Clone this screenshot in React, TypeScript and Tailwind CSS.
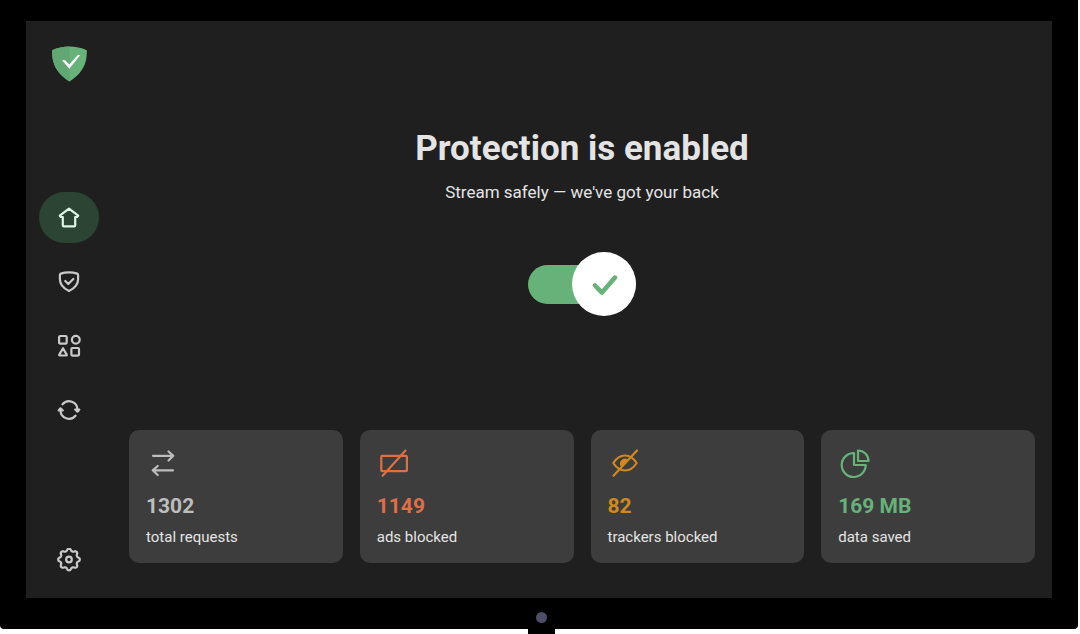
import { useState, type ReactNode } from 'react';
import clsx from 'clsx';

interface IStat {
  value: string;
  label: string;
  color: string;
  icon: ReactNode;
}

interface INavItem {
  name: string;
  icon: ReactNode;
}

// eight rounded teeth around the centre of a 24x24 box
const gearPath =
  Array.from({ length: 96 }, (_, i) => {
    const angle = (i / 96) * Math.PI * 2;
    const wave = Math.cos(angle * 8);
    const radius = 9.7 + 1.1 * Math.sign(wave) * Math.pow(Math.abs(wave), 0.6);
    const x = 12 + radius * Math.sin(angle);
    const y = 11.5 - radius * Math.cos(angle);
    return `${i === 0 ? 'M' : 'L'}${x.toFixed(2)} ${y.toFixed(2)}`;
  }).join('') + 'Z';

function NavIcon({ children }: { children: ReactNode }) {
  return (
    <svg
      viewBox="0 0 24 24"
      className="h-6 w-6"
      fill="none"
      stroke="currentColor"
      strokeWidth="2.2"
      strokeLinecap="round"
      strokeLinejoin="round"
      aria-hidden="true"
    >
      {children}
    </svg>
  );
}

function StatIcon({ children }: { children: ReactNode }) {
  return (
    <svg
      viewBox="0 0 34 34"
      className="h-[34px] w-[34px]"
      fill="none"
      stroke="currentColor"
      strokeWidth="2.2"
      strokeLinecap="round"
      strokeLinejoin="round"
      aria-hidden="true"
    >
      {children}
    </svg>
  );
}

const navItems: INavItem[] = [
  {
    name: 'Home',
    icon: (
      <NavIcon>
        <path d="M12 2.6 2.8 9.6l.9 1.4h2.1v8.600q0 .7.7.7h11q.7 0 .7-.7V11h2.100l.9-1.400Z" />
      </NavIcon>
    ),
  },
  {
    name: 'Protection',
    icon: (
      <NavIcon>
        <path d="M12 2.300c3.200 0 6.200.6 8.200 1.300q.9.4.9 1.300v4.400c0 5.300-4 9.300-9.100 11.800C6.900 18.600 2.900 14.600 2.900 9.300V4.900q0-.9.9-1.300C5.800 2.900 8.800 2.300 12 2.300Z" />
        <path d="m8.300 11 3 3 5-5" />
      </NavIcon>
    ),
  },
  {
    name: 'Apps',
    icon: (
      <NavIcon>
        <rect x="2.1" y="2" width="7.6" height="7.6" rx="1.2" />
        <circle cx="18.8" cy="5.8" r="3.9" />
        <path d="M6 14.200 2.300 20.600q-.4.900.5.900h6.400q.9 0 .5-.9Z" />
        <rect x="14.4" y="14" width="7.6" height="7.6" rx="1" />
      </NavIcon>
    ),
  },
  {
    name: 'Updates',
    icon: (
      <NavIcon>
        <path d="M5.500 6.300A8.500 8.500 0 0 1 20.500 11.500" />
        <path d="M18.500 17.700A8.500 8.500 0 0 1 3.500 12.500" />
        <path d="M1.700 12.500 3.500 10.300 5.800 12.500Z" fill="currentColor" />
        <path d="M18.200 11.500 20.500 13.700 22.300 11.500Z" fill="currentColor" />
      </NavIcon>
    ),
  },
];

const stats: IStat[] = [
  {
    value: '1302',
    label: 'total requests',
    color: 'text-[#bdbdbd]',
    icon: (
      <StatIcon>
        <path d="M7 9.800H27M22.500 5.500 27.300 9.800 22.500 14.500" />
        <path d="M27 24.300H7M11.700 20 6.700 24.300 11.700 29" />
      </StatIcon>
    ),
  },
  {
    value: '1149',
    label: 'ads blocked',
    color: 'text-[#df6f45]',
    icon: (
      <StatIcon>
        <rect x="4.3" y="9.8" width="25.6" height="15.4" rx="1" />
        <path d="M5.700 29.800 28.500 4.500" />
      </StatIcon>
    ),
  },
  {
    value: '82',
    label: 'trackers blocked',
    color: 'text-[#d0881f]',
    icon: (
      <StatIcon>
        <path d="M5.300 17C8.500 12 12.500 9.500 17 9.500S25.500 12 28.700 17C25.500 22 21.500 24.500 17 24.500S8.500 22 5.300 17Z" />
        <path d="M13.500 19.500A4 4 0 0 1 18.500 14Z" fill="currentColor" />
        <path d="M5.500 29.800 29 4.500" />
      </StatIcon>
    ),
  },
  {
    value: '169 MB',
    label: 'data saved',
    color: 'text-[#67b279]',
    icon: (
      <StatIcon>
        <path d="M16 7V19H27.700A12 12 0 1 1 16 7Z" />
        <path d="M20 4.500V15H30.500A10.500 10.500 0 0 0 20 4.500Z" />
      </StatIcon>
    ),
  },
];

function Logo() {
  return (
    <svg viewBox="0 0 36 36" className="h-9 w-9" aria-hidden="true">
      <path
        d="M18.500.5C13 .5 6.300 1.700 1.200 4.300 1.200 10 .5 24.300 18.500 35.400 36.500 24.300 35.800 10 35.800 4.300 30.700 1.700 24 .5 18.500.5Z"
        fill="#67b279"
      />
      <path
        d="M18.500.5C13 .5 6.300 1.700 1.200 4.300 1.200 10 .5 24.300 18.500 35.400Z"
        fill="#60a773"
      />
      <path
        d="M11 14.300h3.200l4.100 4.300L26.800 9h2.500L18.300 22.700Z"
        fill="#fff"
      />
    </svg>
  );
}

function Sidebar() {
  const [active, setActive] = useState('Home');

  return (
    <aside className="flex w-[86px] shrink-0 flex-col items-center pb-[13px] pt-[25px]">
      <Logo />
      <nav className="mt-[110px] flex flex-col gap-[13px]">
        {navItems.map((item) => (
          <button
            key={item.name}
            type="button"
            aria-label={item.name}
            onClick={() => setActive(item.name)}
            className={clsx(
              'flex h-[51px] w-[60px] items-center justify-center rounded-full',
              active === item.name
                ? 'bg-[#2c4434] text-[#dcf8e4]'
                : 'text-[#c9c9c9]',
            )}
          >
            {item.icon}
          </button>
        ))}
      </nav>
      <button
        type="button"
        aria-label="Settings"
        className="mt-auto flex h-[51px] w-[60px] items-center justify-center rounded-full text-[#c9c9c9]"
      >
        <NavIcon>
          <path d={gearPath} />
          <circle cx="12" cy="11.5" r="2.8" />
        </NavIcon>
      </button>
    </aside>
  );
}

function ProtectionSwitch() {
  const [enabled, setEnabled] = useState(true);

  return (
    <label
      className={clsx(
        'relative mt-12 flex h-16 w-[108px] cursor-pointer items-center',
        enabled ? 'justify-end' : 'justify-start',
      )}
    >
      <input
        type="checkbox"
        role="switch"
        aria-label="Protection"
        checked={enabled}
        onChange={() => setEnabled(!enabled)}
        className="absolute inset-x-0 top-[13px] h-[39px] cursor-pointer appearance-none rounded-full bg-[#888] checked:bg-[#67b279]"
      />
      <span className="relative flex h-16 w-16 items-center justify-center rounded-full bg-white">
        <svg
          viewBox="0 0 32 32"
          className="h-8 w-8"
          fill="none"
          stroke="#67b279"
          strokeWidth="4.6"
          strokeLinecap="round"
          strokeLinejoin="round"
          aria-hidden="true"
        >
          <path d="M7 17.500 14 24.600 27 9.600" />
        </svg>
      </span>
    </label>
  );
}

function StatCard({ stat }: { stat: IStat }) {
  return (
    <div className="rounded-[10px] bg-[#3d3d3d] px-[17px] py-4">
      <div className={stat.color}>
        {stat.icon}
        <p className="mt-3 text-[21px] font-bold leading-7">{stat.value}</p>
      </div>
      <p className="mt-[7px] text-[15px] leading-5 text-[#e4e4e4]">
        {stat.label}
      </p>
    </div>
  );
}

export default function App() {
  return (
    <div className="flex min-h-screen flex-col bg-white pr-[2px] font-[Roboto,sans-serif]">
      <div className="flex flex-1 flex-col rounded-b-[4px] bg-black px-[26px] pt-[21px]">
        <div className="flex flex-1 bg-[#1f1f1f]">
          <Sidebar />
          <main className="ml-[17px] flex flex-1 flex-col items-center pb-[35px] pr-[17px] pt-[107px]">
            <h1 className="text-[35px] font-bold leading-[42px] text-[#e4e4e4]">
              Protection is enabled
            </h1>
            <p className="mt-[10px] text-[17px] leading-6 text-[#e4e4e4]">
              Stream safely — we've got your back
            </p>
            <ProtectionSwitch />
            <section className="mt-auto grid w-full grid-cols-4 gap-[17px]">
              {stats.map((stat) => (
                <StatCard key={stat.label} stat={stat} />
              ))}
            </section>
          </main>
        </div>
        <div className="flex h-[31px] items-center justify-center pl-[5px] pt-2">
          <span className="h-[11px] w-[11px] rounded-full bg-[#4c4d66]" />
        </div>
      </div>
      <div className="flex justify-center pl-[5px]">
        <span className="h-[5px] w-[27px] bg-black" />
      </div>
    </div>
  );
}
